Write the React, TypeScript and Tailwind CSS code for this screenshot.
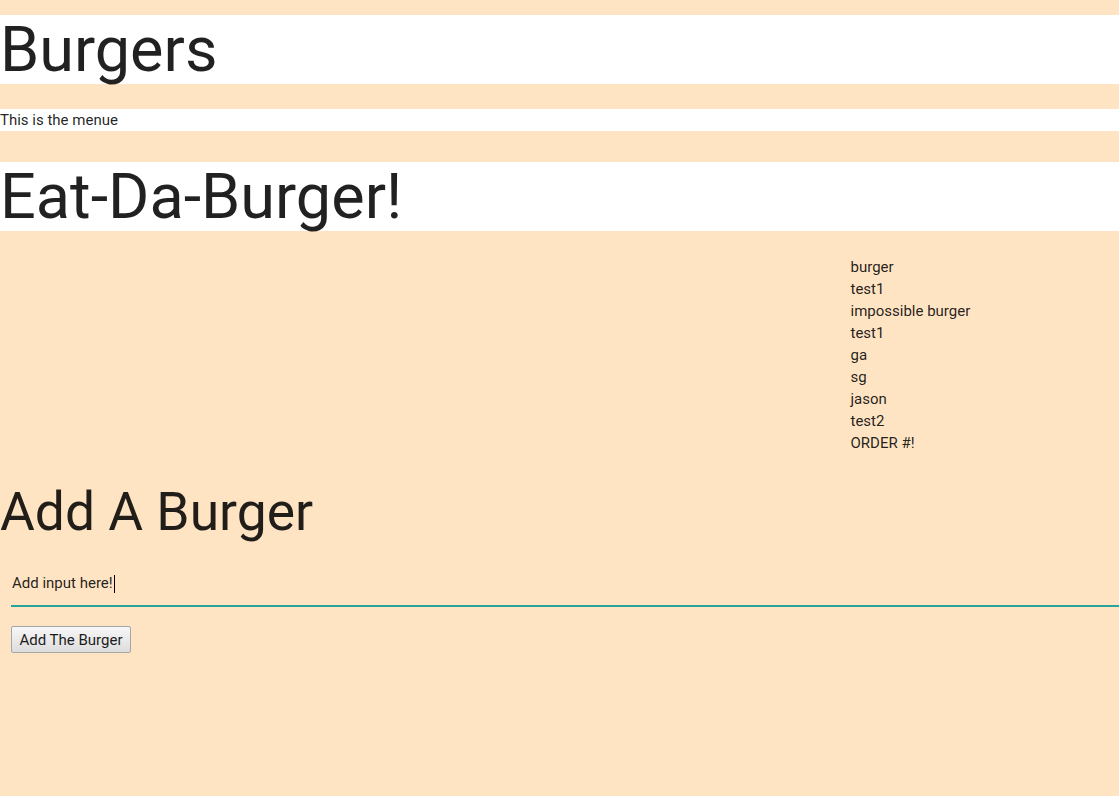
const burgers = [
  "burger",
  "test1",
  "impossible burger",
  "test1",
  "ga",
  "sg",
  "jason",
  "test2",
  "ORDER #!",
];

export default function App() {
  return (
    <div className="min-h-screen bg-[#ffe4c4] pt-[15px] font-['Roboto','Liberation_Sans',sans-serif] text-[#000000de]">
      <h1 className="bg-white text-[63px] leading-[69px]">Burgers</h1>
      <p className="mt-[25px] bg-white text-[15px] leading-[22px]">This is the menue</p>
      <h1 className="mt-[31px] bg-white text-[63px] leading-[69px]">Eat-Da-Burger!</h1>

      <div className="mt-[25px] flex">
        <div className="w-3/4" />
        <ul className="w-1/4 px-[11.25px] text-[15px] leading-[22px]">
          {burgers.map((b, i) => (
            <li key={i}>{b}</li>
          ))}
        </ul>
      </div>

      <h2 className="mt-[28px] text-[53.4px] leading-[59px]">Add A Burger</h2>

      <form className="mt-[20px] pl-[11px]" onSubmit={(e) => e.preventDefault()}>
        <div className="flex h-[46px] items-center border-b-2 border-[#26a69a] pl-px pt-px text-[15px]">
          <span>Add input here!</span>
          <span className="ml-px h-[18px] w-px bg-black" />
        </div>
        <button
          type="submit"
          className="mt-[19px] h-[27px] w-[120px] rounded-[2px] border border-[#a6a6a6] bg-gradient-to-b from-[#f7f7f7] to-[#dddddd] pt-px text-[15px] text-[#1c1c1c]"
        >
          Add The Burger
        </button>
      </form>
    </div>
  );
}
